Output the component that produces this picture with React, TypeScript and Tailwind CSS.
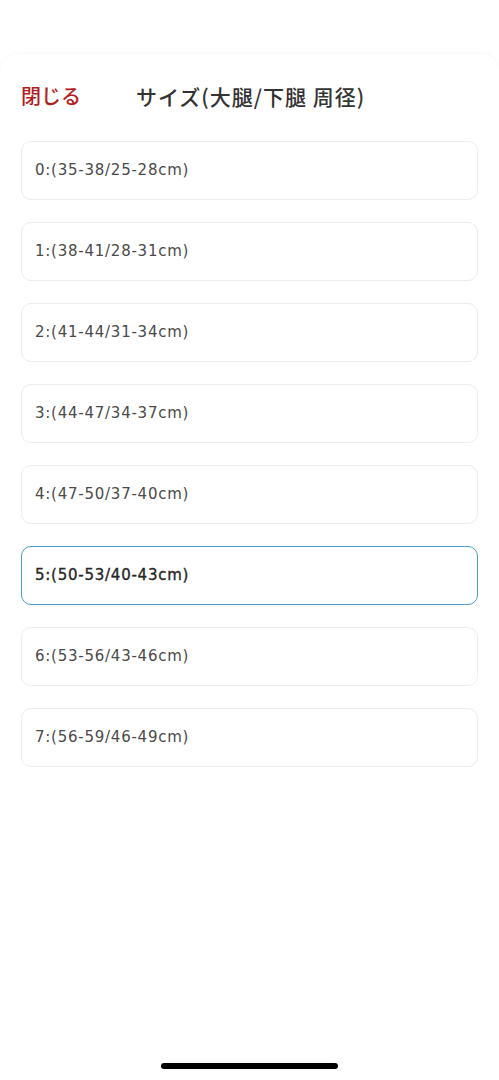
import React from "react";

const sizes = [
  "0:(35-38/25-28cm)",
  "1:(38-41/28-31cm)",
  "2:(41-44/31-34cm)",
  "3:(44-47/34-37cm)",
  "4:(47-50/37-40cm)",
  "5:(50-53/40-43cm)",
  "6:(53-56/43-46cm)",
  "7:(56-59/46-49cm)",
];

export default function App() {
  const selected = 5;
  return (
    <div
      className="relative w-full h-[1080px] bg-white overflow-hidden flex flex-col"
      style={{ fontFamily: '"Noto Sans CJK JP", "Noto Sans", sans-serif' }}
    >
      <div className="mt-[54px] flex-1 flex flex-col rounded-t-[18px] bg-white shadow-[0_-1px_6px_rgba(0,0,0,0.035)]">
        <div className="mt-[20px] h-[44px] flex items-center px-[21px]">
          <span className="text-[20px] font-medium text-[#b21d22] leading-none">閉じる</span>
          <span className="ml-[55px] text-[21px] tracking-[1px] font-medium text-[#333333] leading-none">
            サイズ(大腿/下腿 周径)
          </span>
        </div>
        <div className="mt-[23px] flex flex-col gap-[22px] px-[21px]">
          {sizes.map((s, i) => (
            <div
              key={s}
              className={
                i === selected
                  ? "h-[59px] rounded-[10px] border border-[#4aa0c2] flex items-center px-[13px] text-[15px] tracking-[0.75px] text-[#262626] [-webkit-text-stroke:0.35px_#262626]"
                  : "h-[59px] rounded-[10px] border border-[#ececec] flex items-center px-[13px] text-[15px] tracking-[0.75px] text-[#4a4a4a]"
              }
              style={{ fontFamily: '"DejaVu Sans", "Noto Sans CJK JP", sans-serif' }}
            >
              {s}
            </div>
          ))}
        </div>
        <div className="flex-1" />
        <div className="flex justify-center pb-[11px]">
          <div className="w-[177px] h-[6px] rounded-full bg-black" />
        </div>
      </div>
    </div>
  );
}
